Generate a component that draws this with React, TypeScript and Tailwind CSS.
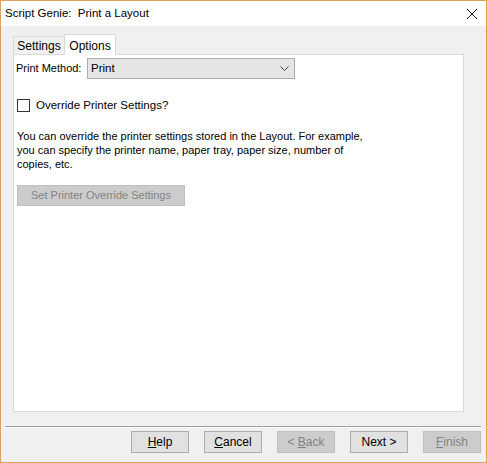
import React from "react";

const font = { fontFamily: '"Liberation Sans", Arial, sans-serif' };

function Btn({ children, disabled }: { children: React.ReactNode; disabled?: boolean }) {
  return (
    <div
      className={
        "w-[58px] h-[22px] shrink-0 flex items-center justify-center border text-[12px] " +
        (disabled
          ? "bg-[#cccccc] border-[#bfbfbf] text-[#838383]"
          : "bg-[#e1e1e1] border-[#adadad] text-black")
      }
    >
      {children}
    </div>
  );
}

export default function App() {
  return (
    <div
      className="w-[487px] h-[463px] border border-[#e0a05a] bg-[#f0f0f0] flex flex-col text-black"
      style={font}
    >
      {/* Title bar */}
      <div className="h-[25px] bg-white flex items-center justify-between pl-[4px] pr-[7px] shrink-0">
        <span className="text-[11.5px]">Script Genie:&nbsp; Print a Layout</span>
        <svg width="12" height="12" viewBox="0 0 12 12" className="mr-[1px]">
          <path d="M1 1 L11 11 M11 1 L1 11" stroke="#111" strokeWidth="1" />
        </svg>
      </div>

      {/* Body */}
      <div className="flex-1 flex flex-col pl-[12px] pt-[8px]">
        {/* Tabs */}
        <div className="flex items-end h-[20px] relative z-10">
          <div className="w-[52px] h-[18px] bg-[#f0f0f0] border border-b-0 border-[#d9d9d9] flex items-center justify-center text-[12px]">
            Settings
          </div>
          <div className="w-[52px] h-[21px] bg-white border border-b-0 border-[#d9d9d9] flex items-start justify-center pt-[2px] text-[12px] -mb-[1px] -ml-[1px]">
            Options
          </div>
        </div>
        {/* Panel */}
        <div className="w-[451px] h-[358px] bg-white border border-[#d9d9d9] pl-[2px] pt-[3px] text-[11px]">
          <div className="flex items-start">
            <div className="w-[71px] pt-[2px] leading-[16px] whitespace-nowrap">Print Method:</div>
            <div className="w-[208px] h-[21px] bg-[#e5e5e5] border border-[#acacac] flex items-center justify-between pl-[3px] pr-[5px] text-[11.5px]">
              <span>Print</span>
              <svg width="9" height="5" viewBox="0 0 9 5">
                <path d="M0.5 0.5 L4.5 4.5 L8.5 0.5" fill="none" stroke="#444" strokeWidth="1" />
              </svg>
            </div>
          </div>
          <div className="flex items-center mt-[20px] ml-[1px] h-[13px]">
            <div className="w-[13px] h-[13px] border border-[#333333] bg-white" />
            <span className="ml-[6px] text-[11.5px]">Override Printer Settings?</span>
          </div>
          <p className="mt-[17px] ml-[1px] leading-[14px] whitespace-nowrap">
            You can override the printer settings stored in the Layout. For example,
            <br />
            you can specify the printer name, paper tray, paper size, number of
            <br />
            copies, etc.
          </p>
          <div className="mt-[14px] ml-[1px] w-[168px] h-[21px] bg-[#cccccc] border border-[#bfbfbf] text-[#838383] flex items-center justify-center">
            Set Printer Override Settings
          </div>
        </div>

        {/* Separator */}
        <div className="mt-[14px] -ml-[8px] w-[476px] h-[2px] border-t border-[#a0a0a0] border-b border-b-white" />

        {/* Buttons */}
        <div className="flex gap-[15px] mt-[3px] ml-[118px]">
          <Btn><span><u>H</u>elp</span></Btn>
          <Btn><span><u>C</u>ancel</span></Btn>
          <Btn disabled><span>&lt; <u>B</u>ack</span></Btn>
          <Btn><span>Next &gt;</span></Btn>
          <Btn disabled><span><u>F</u>inish</span></Btn>
        </div>
      </div>
    </div>
  );
}
